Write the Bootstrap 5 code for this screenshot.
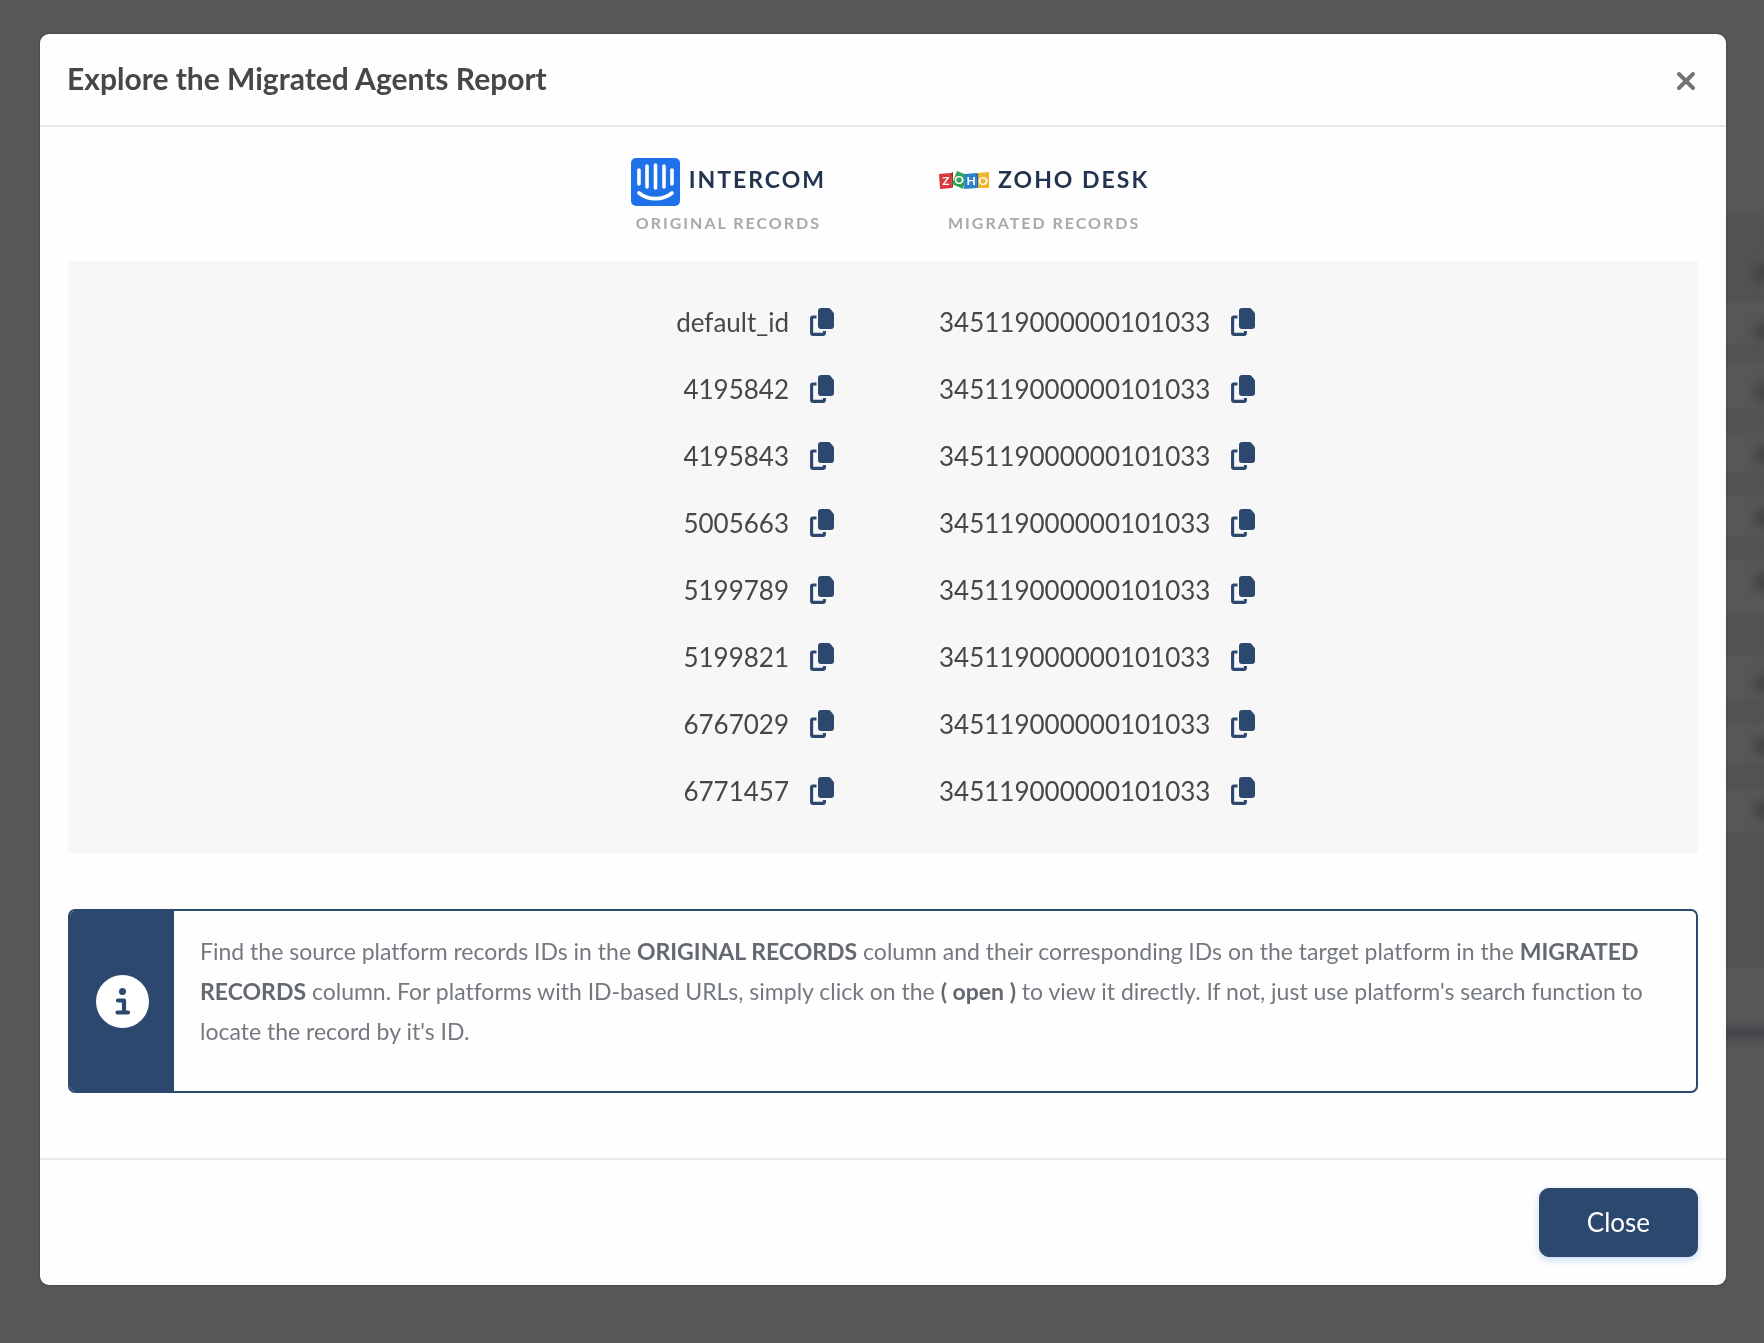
<!DOCTYPE html>
<html lang="en">
<head>
<meta charset="utf-8">
<meta name="viewport" content="width=device-width, initial-scale=1">
<title>Explore the Migrated Agents Report</title>
<link href="https://cdn.jsdelivr.net/npm/bootstrap@5.3.0/dist/css/bootstrap.min.css" rel="stylesheet">
<style>
  :root { --navy: #2d486f; --line: #e9e9e9; }
  body { font-family: Lato, "Open Sans", sans-serif; font-variant-ligatures: none; background: #575757; min-height: 100vh; overflow: hidden; }

  /* dimmed page behind the dialog */
  .dimmed { position: absolute; inset: 0; overflow: hidden; }
  .dimmed-band { position: absolute; right: 0; width: 60px; background: #525252; filter: blur(1px); }
  .dimmed-dot { position: absolute; right: -14px; width: 24px; height: 16px; border-radius: 8px; background: #404040; filter: blur(6px); }
  .dimmed-bar { position: absolute; right: -10px; top: 1028px; width: 60px; height: 10px; background: #404047; filter: blur(4px); }

  .report-dialog { max-width: none; margin: 34px 38px 58px 40px; }
  .report-dialog .modal-content { border: 0; border-radius: 9px; background: #fefefe; color: #474747; box-shadow: 0 0 2px #333; }
  .report-dialog .modal-header { padding: 23px 28px 25px 27px; border-color: var(--line); border-width: 2px; }
  .report-dialog .modal-title { font-size: 30px; line-height: 43px; font-weight: 700; }
  .x-button { width: 24px; height: 24px; margin-top: 5px; }
  .report-dialog .modal-body { padding: 31px 28px 65px; }

  .records { table-layout: fixed; font-size: 26px; line-height: 39px; }
  .records th, .records td { padding: 14px 49px 14px 56px; }
  .records thead th { padding-top: 0; padding-bottom: 26px; font-weight: 700; }
  .records tbody { background: #f7f7f7; }
  .records tbody tr:first-child td { padding-top: 42px; }
  .records tbody tr:last-child td { padding-bottom: 42px; }
  .brand-name { font-size: 23px; line-height: 42px; min-height: 48px; letter-spacing: 2px; color: #22344f; gap: 9px; }
  .brand-note { font-size: 16px; line-height: 24px; letter-spacing: 2px; color: #a9a9a9; margin-top: 5px; }
  .copy-button { width: 24px; height: 29px; color: var(--navy); }
  .copy-gap { gap: 21px; height: 39px; }

  .note-box { border: 2px solid var(--navy); border-radius: 7px; margin-top: 56px; overflow: hidden; }
  .note-icon { width: 104px; background: var(--navy); }
  .note-text { font-size: 23px; line-height: 40px; color: #747980; padding: 20px 26px 40px; }
  .note-text strong { color: #646971; }

  .report-dialog .modal-footer { padding: 28px; border-color: var(--line); border-width: 2px; }
  .btn-navy { --bs-btn-color: #fff; --bs-btn-bg: var(--navy); --bs-btn-border-color: var(--navy);
    --bs-btn-hover-color: #fff; --bs-btn-hover-bg: #243b5c; --bs-btn-hover-border-color: #243b5c;
    font-size: 26px; line-height: 39px; padding: 14px 47px; border-radius: 10px; box-shadow: 0 3px 8px #c9daf4; }
</style>
<script src="https://cdn.jsdelivr.net/npm/bootstrap@5.3.0/dist/js/bootstrap.bundle.min.js"></script>
</head>
<body>
<svg class="d-none" aria-hidden="true">
  <symbol id="copy" viewBox="0 0 24 28">
    <path d="M11 0h7.500a3 3 0 0 1 2 1L23 4a3 3 0 0 1 1 2v12a3 3 0 0 1-3 3H11a3 3 0 0 1-3-3V3a3 3 0 0 1 3-3z" fill="currentColor"/>
    <path d="M6.500 9H2.800a1.200 1.200 0 0 0-1.200 1.200v15A1.200 1.200 0 0 0 2.800 26.400h10.400a1.200 1.200 0 0 0 1.200-1.200V23" fill="none" stroke="currentColor" stroke-width="3.100"/>
  </symbol>
</svg>

<div class="dimmed" aria-hidden="true" id="dimmed"><div class="dimmed-bar"></div></div>

<div class="modal d-block" tabindex="-1" role="dialog" aria-labelledby="reportTitle">
  <div class="modal-dialog report-dialog">
    <div class="modal-content">
      <div class="modal-header justify-content-between">
        <h1 class="modal-title" id="reportTitle">Explore the Migrated Agents Report</h1>
        <button type="button" class="btn p-0 border-0 x-button d-flex align-items-center justify-content-center" aria-label="Close dialog">
          <svg width="24" height="24" viewBox="0 0 24 24"><path d="M5 5l14 14M19 5L5 19" stroke="#737373" stroke-width="4" stroke-linecap="round"/></svg>
        </button>
      </div>

      <div class="modal-body">
        <table class="w-100 records">
          <thead>
            <tr>
              <th scope="col">
                <div class="d-flex justify-content-end pe-2">
                  <div class="text-center">
                    <div class="brand-name d-flex align-items-start">
                      <svg width="49" height="48" viewBox="0 0 49 48" aria-hidden="true"><rect width="49" height="48" rx="5" fill="#1f71ea"/><g fill="none" stroke="#fff" stroke-width="3.600" stroke-linecap="round"><path d="M8 12v14M16 8v21M24.500 7v23M33 8v21M41 12v14M8 35c9 7.500 24 7.500 33 0"/></g></svg>
                      <span>INTERCOM</span>
                    </div>
                    <div class="brand-note">ORIGINAL RECORDS</div>
                  </div>
                </div>
              </th>
              <th scope="col">
                <div class="d-flex">
                  <div class="text-center">
                    <div class="brand-name d-flex align-items-start">
                      <svg width="50" height="44" viewBox="0 -13 50 44" aria-hidden="true">
                        <g font-family="Lato, sans-serif" font-weight="700" font-size="12" letter-spacing="0" text-anchor="middle" fill="#fff">
                          <path d="M0 3l12-1 1 15-12 1z" fill="#d9393c"/><path d="M12 2l2-1v15l-1 1z" fill="#8e2b2d"/>
                          <path d="M18 0l10 4-4 14-11-5z" fill="#2fa45a"/>
                          <path d="M26 3l11-1 1 15-13 1z" fill="#2c83cb"/><path d="M37 2l3 1v13l-2 1z" fill="#1d5b95"/>
                          <path d="M39 2l11-1v16H39z" fill="#efb52f"/>
                          <text x="7" y="14">Z</text><text x="20" y="13">O</text><text x="32" y="14">H</text><text x="44" y="14">O</text>
                        </g>
                      </svg>
                      <span>ZOHO DESK</span>
                    </div>
                    <div class="brand-note">MIGRATED RECORDS</div>
                  </div>
                </div>
              </th>
            </tr>
          </thead>
          <tbody id="rows"></tbody>
        </table>

        <div class="note-box d-flex">
          <div class="note-icon d-flex align-items-center justify-content-center flex-shrink-0">
            <svg width="53" height="53" viewBox="0 0 53 53" aria-hidden="true"><circle cx="26.500" cy="26.500" r="26.500" fill="#fff"/><circle cx="26.500" cy="16.500" r="3.500" fill="#2d486f"/><path d="M22 25.500h6v12M21.500 37.500h10.500" fill="none" stroke="#2d486f" stroke-width="4.200" stroke-linecap="round" stroke-linejoin="round"/></svg>
          </div>
          <p class="note-text mb-0">Find the source platform records IDs in the <strong>ORIGINAL RECORDS</strong> column and their corresponding IDs on the target platform in the <strong>MIGRATED RECORDS</strong> column. For platforms with ID-based URLs, simply click on the <strong>( open )</strong> to view it directly. If not, just use platform's search function to locate the record by it's ID.</p>
        </div>
      </div>

      <div class="modal-footer">
        <button type="button" class="btn btn-navy m-0">Close</button>
      </div>
    </div>
  </div>
</div>

<script>
  const ids = ['default_id', '4195842', '4195843', '5005663', '5199789', '5199821', '6767029', '6771457'];
  const target = '345119000000101033';
  const copy = id => `<button type="button" class="btn p-0 border-0 copy-button d-flex" aria-label="Copy ${id}"><svg width="24" height="28" aria-hidden="true"><use href="#copy"/></svg></button>`;
  document.getElementById('rows').innerHTML = ids.map(id => `<tr>
    <td><div class="d-flex align-items-center justify-content-end copy-gap"><span>${id}</span>${copy(id)}</div></td>
    <td><div class="d-flex align-items-center copy-gap"><span>${target}</span>${copy(target)}</div></td></tr>`).join('');

  const bands = [[215, 87], [344, 20], [409, 24], [472, 24], [537, 23], [614, 42], [700, 24], [764, 25], [832, 135]];
  const dots = [273, 331, 392, 455, 518, 582, 683, 746, 810];
  document.getElementById('dimmed').insertAdjacentHTML('afterbegin',
    bands.map(([y, h]) => `<div class="dimmed-band" style="top:${y}px;height:${h}px"></div>`).join('') +
    dots.map(y => `<div class="dimmed-dot" style="top:${y - 8}px"></div>`).join(''));
</script>
</body>
</html>
